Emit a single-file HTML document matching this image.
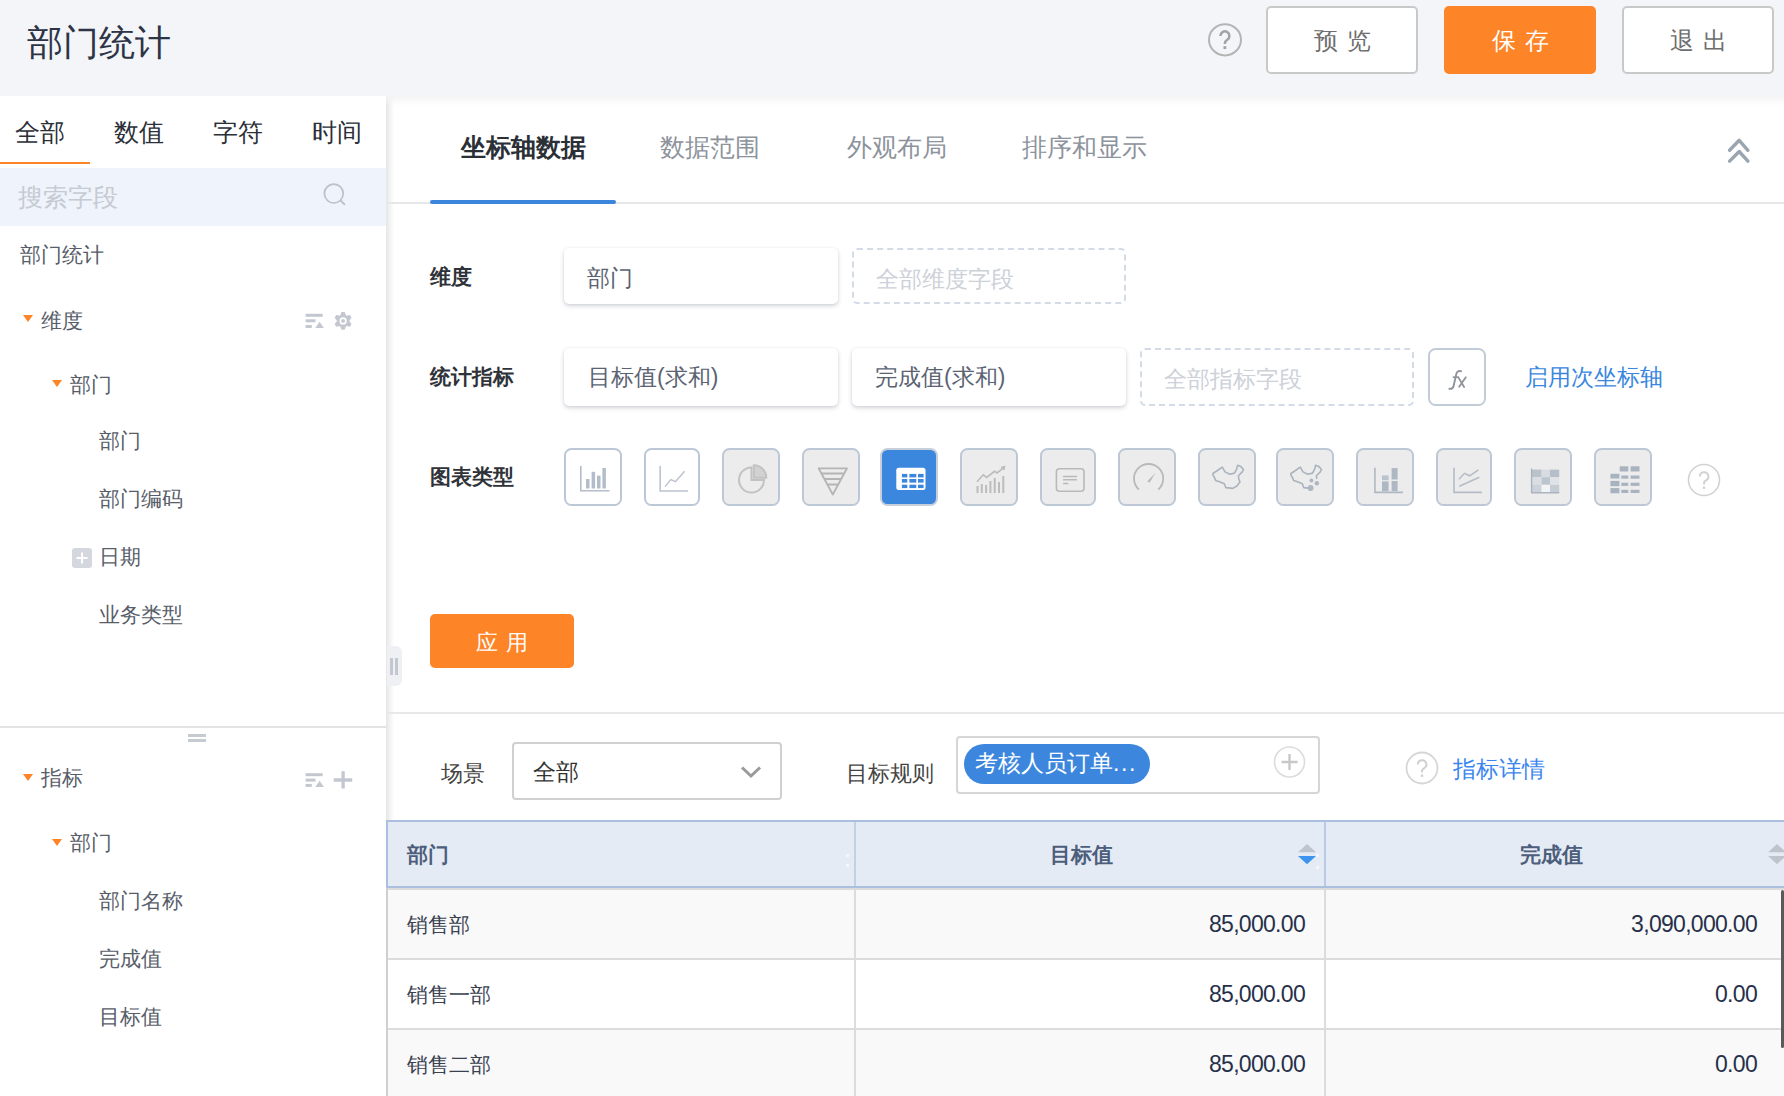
<!DOCTYPE html>
<html><head><meta charset="utf-8">
<style>
*{margin:0;padding:0;box-sizing:border-box}
html,body{width:1784px;height:1096px;overflow:hidden;background:#f4f5f9;font-family:"Liberation Sans",sans-serif;color:#333}
.a{position:absolute}
.t{position:absolute;white-space:nowrap;line-height:1}
.btn{position:absolute;top:6px;height:68px;width:152px;border:2px solid #c9c9c9;border-radius:5px;background:#fff;color:#6e6e6e;font-size:24px;line-height:65px;text-align:center;letter-spacing:9px;text-indent:9px}
.btn.o{background:#fd8427;border-color:#fd8427;color:#fff}
.tri{position:absolute;width:0;height:0;border-left:5.5px solid transparent;border-right:5.5px solid transparent;border-top:7.5px solid #fd8427;margin-left:0.5px}
.lt{font-size:21px;color:#575d69}
.lbl{font-size:21px;font-weight:bold;color:#2f3238}
.box{position:absolute;background:#fff;border-radius:5px;box-shadow:0 0 2px rgba(0,0,0,.07),0 2px 4px rgba(50,60,80,.22)}
.dash{position:absolute;border:2px dashed #d3dbe7;border-radius:5px}
.bt{font-size:23px;color:#5b6373}
.ph{font-size:23px;color:#cdd1d8}
.ic{position:absolute;top:448px;width:58px;height:58px;border:2px solid #bccadb;border-radius:7px;background:#ececec}
.ic svg{position:absolute;left:-2px;top:-2px;width:58px;height:58px}
.th{font-size:21px;font-weight:bold;color:#4c5e7b}
.td{font-size:21px;color:#3a4252}
.num{font-size:23px;color:#26304a;letter-spacing:-0.7px}
</style></head><body>
<!-- header -->
<div class="t" style="left:27px;top:25px;font-size:36px;color:#2d3446">部门统计</div>
<svg class="a" style="left:1207px;top:22px" width="36" height="36" viewBox="0 0 36 36"><ellipse cx="18" cy="17.8" rx="16" ry="15.6" fill="none" stroke="#b4b4b4" stroke-width="2"/><path d="M13.4 14a4.5 4.5 0 1 1 6.9 3.7c-1.5 1-2.4 1.9-2.4 3.5v.8" fill="none" stroke="#a3a3a3" stroke-width="2.5"/><rect x="16.5" y="24.2" width="2.8" height="2.8" fill="#a3a3a3"/></svg>
<div class="btn" style="left:1266px">预览</div>
<div class="btn o" style="left:1444px">保存</div>
<div class="btn" style="left:1622px">退出</div>

<!-- left panel -->
<div class="a" style="left:0;top:96px;width:386px;height:1000px;background:#fff"></div>
<div class="t" style="left:15px;top:120px;font-size:25px;color:#2b2f38">全部</div>
<div class="t" style="left:114px;top:120px;font-size:25px;color:#2b2f38">数值</div>
<div class="t" style="left:213px;top:120px;font-size:25px;color:#2b2f38">字符</div>
<div class="t" style="left:312px;top:120px;font-size:25px;color:#2b2f38">时间</div>
<div class="a" style="left:0;top:162px;width:90px;height:2px;background:#fd8427"></div>
<div class="a" style="left:0;top:168px;width:386px;height:58px;background:#eef3fc"></div>
<div class="t" style="left:18px;top:185px;font-size:25px;color:#c6cad1">搜索字段</div>
<svg class="a" style="left:320px;top:180px" width="30" height="30" viewBox="0 0 30 30"><circle cx="13.8" cy="13.6" r="9.4" fill="none" stroke="#bcc0c8" stroke-width="1.7"/><path d="M20.6 20.4l3.8 3.9" stroke="#bcc0c8" stroke-width="1.9" stroke-linecap="round"/></svg>

<div class="t lt" style="left:20px;top:244px">部门统计</div>
<div class="tri" style="left:22px;top:315px"></div>
<div class="t lt" style="left:41px;top:310px">维度</div>
<svg class="a" style="left:304px;top:312px" width="50" height="20" viewBox="0 0 50 20"><g fill="#c3c7d0"><rect x="1.6" y="1.8" width="17.1" height="3"/><rect x="1.6" y="7.3" width="9.9" height="3"/><rect x="1.6" y="13" width="6.2" height="3"/><path d="M11.3 16h8.6l-4.3-6.2z"/><path d="M37.54,0.04 L40.66,0.04 L42.10,3.70 L45.99,3.11 L47.56,5.82 L45.10,8.90 L47.56,11.98 L45.99,14.69 L42.10,14.10 L40.66,17.76 L37.54,17.76 L36.10,14.10 L32.21,14.69 L30.64,11.98 L33.10,8.90 L30.64,5.82 L32.21,3.11 L36.10,3.70z"/><circle cx="39.1" cy="8.9" r="6.2"/></g><circle cx="39.1" cy="8.9" r="3.6" fill="#fff"/><circle cx="39.1" cy="8.9" r="1.9" fill="#c3c7d0"/></svg>
<div class="tri" style="left:51px;top:380px"></div>
<div class="t lt" style="left:70px;top:374px">部门</div>
<div class="t lt" style="left:99px;top:430px">部门</div>
<div class="t lt" style="left:99px;top:488px">部门编码</div>
<svg class="a" style="left:72px;top:548px" width="20" height="20" viewBox="0 0 20 20"><rect x="0" y="0" width="20" height="20" rx="3" fill="#d4d8de"/><path d="M10 4.5v11M4.5 10h11" stroke="#fff" stroke-width="2"/></svg>
<div class="t lt" style="left:99px;top:546px">日期</div>
<div class="t lt" style="left:99px;top:604px">业务类型</div>

<div class="a" style="left:0;top:726px;width:386px;height:2px;background:#e3e3e3"></div>
<div class="a" style="left:188px;top:734px;width:18px;height:3px;background:#c6cad1"></div>
<div class="a" style="left:188px;top:739px;width:18px;height:3px;background:#c6cad1"></div>

<div class="tri" style="left:22px;top:774px"></div>
<div class="t lt" style="left:41px;top:767px">指标</div>
<svg class="a" style="left:304px;top:770px" width="50" height="20" viewBox="0 0 50 20"><g fill="#c3c7d0"><rect x="1.6" y="3.2" width="17.1" height="3"/><rect x="1.6" y="8.6" width="9.9" height="3"/><rect x="1.6" y="13.9" width="6.2" height="3"/><path d="M11.3 16.9h8.6l-4.3-6.1z"/></g><path d="M39.1 1.2v17.4M29.7 10h18.5" stroke="#c3c7d0" stroke-width="3.3"/></svg>
<div class="tri" style="left:51px;top:839px"></div>
<div class="t lt" style="left:70px;top:832px">部门</div>
<div class="t lt" style="left:99px;top:890px">部门名称</div>
<div class="t lt" style="left:99px;top:948px">完成值</div>
<div class="t lt" style="left:99px;top:1006px">目标值</div>

<!-- right panel -->
<div class="a" style="left:386px;top:96px;width:1398px;height:1000px;background:#fff"></div>
<div class="a" style="left:386px;top:96px;width:8px;height:1000px;background:linear-gradient(to right,#e6e6e6,rgba(255,255,255,0))"></div>
<div class="a" style="left:386px;top:96px;width:1398px;height:10px;background:linear-gradient(to bottom,#f4f4f5,rgba(255,255,255,0))"></div>

<div class="t" style="left:461px;top:135px;font-size:25px;font-weight:bold;color:#2b2f36">坐标轴数据</div>
<div class="t" style="left:660px;top:135px;font-size:25px;color:#8d939c">数据范围</div>
<div class="t" style="left:847px;top:135px;font-size:25px;color:#8d939c">外观布局</div>
<div class="t" style="left:1022px;top:135px;font-size:25px;color:#8d939c">排序和显示</div>
<div class="a" style="left:386px;top:202px;width:1398px;height:2px;background:#e6e7e9"></div>
<div class="a" style="left:430px;top:200px;width:186px;height:4px;border-radius:2px;background:#3b86dc"></div>
<svg class="a" style="left:1724px;top:134px" width="30" height="32" viewBox="0 0 30 32"><path d="M5.6 16.3l9.6-10 8.7 10M5.6 27.1l9.6-9.6 8.7 9.6" fill="none" stroke="#9ba5b0" stroke-width="3.4" stroke-linecap="round" stroke-linejoin="round"/></svg>

<div class="t lbl" style="left:430px;top:266px">维度</div>
<div class="box" style="left:564px;top:248px;width:274px;height:56px"></div>
<div class="t bt" style="left:587px;top:267px">部门</div>
<div class="dash" style="left:852px;top:248px;width:274px;height:56px"></div>
<div class="t ph" style="left:876px;top:268px">全部维度字段</div>

<div class="t lbl" style="left:430px;top:366px">统计指标</div>
<div class="box" style="left:564px;top:348px;width:274px;height:58px"></div>
<div class="t bt" style="left:588px;top:366px">目标值(求和)</div>
<div class="box" style="left:852px;top:348px;width:274px;height:58px"></div>
<div class="t bt" style="left:875px;top:366px">完成值(求和)</div>
<div class="dash" style="left:1140px;top:348px;width:274px;height:58px"></div>
<div class="t ph" style="left:1164px;top:368px">全部指标字段</div>
<svg class="a" style="left:1428px;top:348px" width="58" height="58" viewBox="0 0 58 58"><rect x="1" y="1" width="56" height="56" rx="6.5" fill="#fff" stroke="#c2ccd9" stroke-width="2"/><path d="M33 23.2c-2.6-.6-4.2.4-4.8 3.2l-2.6 11.6c-.5 2.2-2 3.1-4.2 2.8" fill="none" stroke="#8f939a" stroke-width="1.9" stroke-linecap="round"/><path d="M24.8 29.2h6.2" stroke="#8f939a" stroke-width="1.7"/><path d="M30.5 29.6l5.6 9.4M37.8 29.2l-6.6 9.6" stroke="#8f939a" stroke-width="1.8" stroke-linecap="round"/></svg>
<div class="t" style="left:1525px;top:366px;font-size:23px;color:#3a87dd">启用次坐标轴</div>

<div class="t lbl" style="left:430px;top:466px">图表类型</div>
<svg class="a" style="left:564px;top:448px" width="58" height="58" viewBox="0 0 58 58"><rect x="1" y="1" width="56" height="56" rx="6.5" fill="#fff" stroke="#bdc8d6" stroke-width="2"/><path d="M16.8 18v24.8H45.5" fill="none" stroke="#b3bdca" stroke-width="1.6"/><g fill="#b3bdca"><rect x="22" y="31" width="3.5" height="9.5"/><rect x="27.6" y="23.8" width="3.5" height="16.7"/><rect x="33" y="27.6" width="3.5" height="12.9"/><rect x="38.4" y="20" width="3.5" height="20.5"/></g></svg>
<svg class="a" style="left:644px;top:448px" width="56" height="58" viewBox="0 0 56 58"><rect x="1" y="1" width="54" height="56" rx="6.5" fill="#fff" stroke="#bdc8d6" stroke-width="2"/><path d="M16.2 18v25H44" fill="none" stroke="#bcc4ce" stroke-width="1.6"/><path d="M21.1 38.6l5.6-7 4.8 2.1 9.1-10.4" fill="none" stroke="#bcc4ce" stroke-width="1.5"/></svg>
<svg class="a" style="left:722px;top:448px" width="58" height="58" viewBox="0 0 58 58"><rect x="1" y="1" width="56" height="56" rx="6.5" fill="#ececec" stroke="#bdc8d6" stroke-width="2"/><path d="M29.5 19.5A12.5 12.5 0 1 0 42 32H29.5z" fill="none" stroke="#c2c2c2" stroke-width="2"/><path d="M31.8 17.2A12.5 12.5 0 0 1 44.3 29.7H31.8z" fill="#d2d2d2" stroke="#c2c2c2" stroke-width="2"/></svg>
<svg class="a" style="left:802px;top:448px" width="58" height="58" viewBox="0 0 58 58"><rect x="1" y="1" width="56" height="56" rx="6.5" fill="#ececec" stroke="#bdc8d6" stroke-width="2"/><path d="M16.6 20.3h28.4L30.8 46.5z" fill="none" stroke="#b4b4b4" stroke-width="1.8" stroke-linejoin="round"/><path d="M19.5 25.5h22.6M22.4 31h16.8M25.3 36.5h11" stroke="#b4b4b4" stroke-width="1.8"/></svg>
<svg class="a" style="left:880px;top:448px" width="58" height="58" viewBox="0 0 58 58"><rect x="1" y="1" width="56" height="56" rx="6.5" fill="#3b87dd" stroke="#c6cfda" stroke-width="2"/><rect x="16.3" y="19.8" width="29.2" height="22.1" rx="2.5" fill="#fff"/><g fill="#3b87dd"><rect x="21.9" y="25.9" width="5.4" height="3.5"/><rect x="29.4" y="25.9" width="6.9" height="3.5"/><rect x="38" y="25.9" width="5.6" height="3.5"/><rect x="21.9" y="31" width="5.4" height="3.6"/><rect x="29.4" y="31" width="6.9" height="3.6"/><rect x="38" y="31" width="5.6" height="3.6"/><rect x="21.9" y="36.7" width="5.4" height="3.4"/><rect x="29.4" y="36.7" width="6.9" height="3.4"/><rect x="38" y="36.7" width="5.6" height="3.4"/></g></svg>
<svg class="a" style="left:960px;top:448px" width="58" height="58" viewBox="0 0 58 58"><rect x="1" y="1" width="56" height="56" rx="6.5" fill="#ececec" stroke="#bdc8d6" stroke-width="2"/><g fill="#bcbcbc"><rect x="16.5" y="38" width="2" height="7"/><rect x="20.8" y="36" width="2" height="9"/><rect x="25.1" y="37" width="2" height="8"/><rect x="29.4" y="33" width="2" height="12"/><rect x="33.7" y="30" width="2" height="15"/><rect x="38" y="34" width="2" height="11"/><rect x="42.3" y="28" width="2" height="17"/></g><path d="M17 33.7l6.2-6.9 3.5 2.6 7.8-6.1 2.6 1.7 7.3-5.8" fill="none" stroke="#bcbcbc" stroke-width="1.6"/><path d="M45.5 17.5l-1 5-4-3.5z" fill="#bcbcbc"/></svg>
<svg class="a" style="left:1040px;top:448px" width="56" height="58" viewBox="0 0 56 58"><rect x="1" y="1" width="54" height="56" rx="6.5" fill="#ececec" stroke="#bdc8d6" stroke-width="2"/><rect x="16.4" y="20.8" width="27.6" height="22.4" rx="3" fill="none" stroke="#b9b9b9" stroke-width="1.6"/><path d="M23.1 28.5H37M23.1 31.7H37M23.1 35.4h5.3" stroke="#b9b9b9" stroke-width="1.5"/></svg>
<svg class="a" style="left:1118px;top:448px" width="58" height="58" viewBox="0 0 58 58"><rect x="1" y="1" width="56" height="56" rx="6.5" fill="#ececec" stroke="#bdc8d6" stroke-width="2"/><path d="M20.9 41.5A14.6 14.6 0 1 1 40.3 41.5" fill="none" stroke="#b9b9b9" stroke-width="1.8"/><path d="M29.3 33.2l8.3-8.5-6.2 10z" fill="#b9b9b9"/></svg>
<svg class="a" style="left:1198px;top:448px" width="58" height="58" viewBox="0 0 58 58"><rect x="1" y="1" width="56" height="56" rx="6.5" fill="#ececec" stroke="#bdc8d6" stroke-width="2"/><path d="M14.9,25.5 L18,23.5 L24.3,19.2 L27,23.9 L31.8,26.3 L36.5,25.1 L38.8,20.8 L39.6,17.2 L42.7,18.4 L45.5,21.5 L44.3,23.9 L40.4,27.8 L40.8,31 L42,34.1 L38.8,38 L34.9,40.4 L27.8,39.6 L26.3,35.7 L21.5,33.7 L17.6,32.5 L16.4,29.4 L14.9,27z" fill="none" stroke="#aab3be" stroke-width="1.6" stroke-linejoin="round"/></svg>
<svg class="a" style="left:1276px;top:448px" width="58" height="58" viewBox="0 0 58 58"><rect x="1" y="1" width="56" height="56" rx="6.5" fill="#ececec" stroke="#bdc8d6" stroke-width="2"/><path d="M34.9,40.4 L27.8,39.6 L26.3,35.7 L21.5,33.7 L17.6,32.5 L16.4,29.4 L14.9,27 L14.9,25.5 L18,23.5 L24.3,19.2 L27,23.9 L31.8,26.3 L36.5,25.1 L38.8,20.8 L39.6,17.2 L42.7,18.4 L45.5,21.5 L44.3,23.9 L40.4,27.8 L40.8,31" fill="none" stroke="#aab3be" stroke-width="1.6" stroke-linejoin="round"/><g fill="#aeb6c1"><circle cx="34.6" cy="40" r="2.9"/><circle cx="35.4" cy="32.5" r="1.9"/><circle cx="40.9" cy="35.3" r="2.2"/></g></svg>
<svg class="a" style="left:1356px;top:448px" width="58" height="58" viewBox="0 0 58 58"><rect x="1" y="1" width="56" height="56" rx="6.5" fill="#ececec" stroke="#bdc8d6" stroke-width="2"/><path d="M18.9 19.8v24.6h28" fill="none" stroke="#aeb8c4" stroke-width="1.6"/><g fill="#aeb8c4"><rect x="26" y="27.4" width="6.6" height="4.8" fill="#b9c2cd"/><rect x="26" y="33.4" width="6.6" height="9.8"/><rect x="35.6" y="20.1" width="6" height="11.4"/><rect x="35.6" y="33" width="6" height="10.2"/></g></svg>
<svg class="a" style="left:1436px;top:448px" width="56" height="58" viewBox="0 0 56 58"><rect x="1" y="1" width="54" height="56" rx="6.5" fill="#ececec" stroke="#bdc8d6" stroke-width="2"/><path d="M18 19.8v24.6h27.9" fill="none" stroke="#b4bcc7" stroke-width="1.6"/><path d="M22.9 31.3l5.6-6 5.2 2.5 8.7-6M23.3 38.2l20-9" fill="none" stroke="#b4bcc7" stroke-width="1.5"/></svg>
<svg class="a" style="left:1514px;top:448px" width="58" height="58" viewBox="0 0 58 58"><rect x="1" y="1" width="56" height="56" rx="6.5" fill="#ececec" stroke="#bdc8d6" stroke-width="2"/><g><rect x="17.4" y="21.6" width="10.2" height="7.6" fill="#bac2cc"/><rect x="27.6" y="21.6" width="8.4" height="7.6" fill="#d8dce1"/><rect x="36" y="21.6" width="9.2" height="7.6" fill="#b6bec9"/><rect x="17.4" y="29.2" width="10.2" height="7.6" fill="#dadee3"/><rect x="27.6" y="29.2" width="8.4" height="7.6" fill="#bcc4ce"/><rect x="36" y="29.2" width="9.2" height="7.6" fill="#dfe2e6"/><rect x="17.4" y="36.8" width="10.2" height="7.6" fill="#ccd2d9"/><rect x="27.6" y="36.8" width="8.4" height="7.6" fill="#f2f3f5"/><rect x="36" y="36.8" width="9.2" height="7.6" fill="#c6ccd4"/></g><path d="M17.6 20.6v24.2h27.6" fill="none" stroke="#aab3bf" stroke-width="1.4"/></svg>
<svg class="a" style="left:1594px;top:448px" width="58" height="58" viewBox="0 0 58 58"><rect x="1" y="1" width="56" height="56" rx="6.5" fill="#ececec" stroke="#bdc8d6" stroke-width="2"/><g fill="#a9b3bf"><rect x="25.7" y="18.3" width="8.6" height="5.2"/><rect x="36.6" y="18.3" width="8.9" height="5.2"/><rect x="16.4" y="25.8" width="9" height="4.7"/><rect x="16.4" y="32.9" width="9" height="5.3"/><rect x="16.4" y="40.1" width="9" height="5.2"/><rect x="27.3" y="27.5" width="7" height="3.2"/><rect x="27.3" y="34.7" width="7" height="3.2"/><rect x="27.3" y="41.8" width="7" height="3.2"/><rect x="36.6" y="27.5" width="8.9" height="3.2"/><rect x="36.6" y="34.7" width="8.9" height="3.2"/><rect x="36.6" y="41.8" width="8.9" height="3.2"/></g></svg>
<svg class="a" style="left:1687px;top:463px" width="34" height="34" viewBox="0 0 34 34"><circle cx="17" cy="17" r="15.5" fill="none" stroke="#d2d2d2" stroke-width="1.6"/><path d="M12.8 13.5a4.3 4.3 0 1 1 6.2 3.9c-1.3.7-2 1.5-2 2.8v1.3" fill="none" stroke="#d2d2d2" stroke-width="2"/><rect x="15.8" y="23.5" width="2.4" height="2.4" fill="#d2d2d2"/></svg>

<div class="a" style="left:430px;top:614px;width:144px;height:54px;border-radius:5px;background:#fd8427"></div>
<div class="t" style="left:430px;top:632px;width:144px;text-align:center;font-size:22px;color:#fff;letter-spacing:8px;text-indent:8px">应用</div>
<div class="a" style="left:387px;top:646px;width:15px;height:40px;border-radius:0 6px 6px 0;background:#eef0f3"></div>
<div class="a" style="left:390px;top:658px;width:3px;height:17px;background:#c3c7cf"></div>
<div class="a" style="left:395px;top:658px;width:3px;height:17px;background:#c3c7cf"></div>
<div class="a" style="left:386px;top:712px;width:1398px;height:2px;background:#e8e8e8"></div>

<div class="t" style="left:441px;top:763px;font-size:22px;color:#444">场景</div>
<div class="a" style="left:512px;top:742px;width:270px;height:58px;border:2px solid #d0d0d0;border-radius:4px;background:#fff"></div>
<div class="t" style="left:533px;top:761px;font-size:23px;color:#333">全部</div>
<svg class="a" style="left:738px;top:762px" width="26" height="20" viewBox="0 0 26 20"><path d="M4 5.5l9 8.5 9-8.5" fill="none" stroke="#9a9a9a" stroke-width="3"/></svg>
<div class="t" style="left:846px;top:763px;font-size:22px;color:#444">目标规则</div>
<div class="a" style="left:956px;top:736px;width:364px;height:58px;border:2px solid #d6d6d6;border-radius:4px;background:#fff"></div>
<div class="a" style="left:964px;top:744px;width:186px;height:40px;border-radius:20px;background:#3c87dd"></div>
<div class="t" style="left:975px;top:752px;font-size:23px;color:#fff">考核人员订单<span style="letter-spacing:1.6px">...</span></div>
<svg class="a" style="left:1273px;top:746px" width="34" height="32" viewBox="0 0 34 32"><circle cx="16.5" cy="16" r="15" fill="none" stroke="#dcdcdc" stroke-width="1.6"/><path d="M16.5 8v16M8.5 16h16" stroke="#c8c8c8" stroke-width="2.4"/></svg>
<svg class="a" style="left:1405px;top:751px" width="34" height="34" viewBox="0 0 34 34"><circle cx="17" cy="17" r="15.5" fill="none" stroke="#d6d6d6" stroke-width="1.8"/><path d="M12.8 13.5a4.3 4.3 0 1 1 6.2 3.9c-1.3.7-2 1.5-2 2.8v1.3" fill="none" stroke="#d0d0d0" stroke-width="2"/><rect x="15.8" y="23.5" width="2.4" height="2.4" fill="#d0d0d0"/></svg>
<div class="t" style="left:1453px;top:758px;font-size:23px;color:#3b86ee">指标详情</div>


<div class="a" style="left:386px;top:820px;width:1398px;height:68px;background:#e5ebf5;border-top:2px solid #aac0de;border-bottom:2px solid #aac0de;border-left:2px solid #aac0de"></div>
<div class="a" style="left:854px;top:822px;width:2px;height:64px;background:#c0d0e6"></div>
<div class="a" style="left:1324px;top:822px;width:2px;height:64px;background:#b8cbe6"></div>
<div class="a" style="left:386px;top:888px;width:1398px;height:2px;background:#dcdcdc"></div>
<div class="a" style="left:386px;top:890px;width:1398px;height:68px;background:#f9f9f9"></div>
<div class="a" style="left:386px;top:958px;width:1398px;height:2px;background:#dcdcdc"></div>
<div class="a" style="left:386px;top:960px;width:1398px;height:68px;background:#fff"></div>
<div class="a" style="left:386px;top:1028px;width:1398px;height:2px;background:#dcdcdc"></div>
<div class="a" style="left:386px;top:1030px;width:1398px;height:66px;background:#f9f9f9"></div>
<div class="a" style="left:386px;top:888px;width:2px;height:208px;background:#cfcfcf"></div>
<div class="a" style="left:854px;top:888px;width:2px;height:208px;background:#dcdcdc"></div>
<div class="a" style="left:1324px;top:888px;width:2px;height:208px;background:#dcdcdc"></div>
<div class="a" style="left:1781px;top:890px;width:3px;height:158px;border-radius:2px;background:#5a5a5a"></div>
<div class="t th" style="left:407px;top:844px">部门</div>
<div class="a" style="left:846px;top:854px;width:3px;height:3px;background:#f4f6fa"></div><div class="a" style="left:846px;top:864px;width:3px;height:3px;background:#f4f6fa"></div><div class="a" style="left:1316px;top:854px;width:3px;height:3px;background:#f4f6fa"></div><div class="a" style="left:1316px;top:866px;width:3px;height:3px;background:#f4f6fa"></div>
<div class="t th" style="left:1050px;top:844px">目标值</div>
<div class="t th" style="left:1520px;top:844px">完成值</div>
<svg class="a" style="left:1296px;top:842px" width="22" height="24" viewBox="0 0 22 24"><path d="M2 10.2L11 2l9 8.2z" fill="#bfc4cc"/><path d="M2 13.9h18L11 22.3z" fill="#3c93f0"/></svg>
<svg class="a" style="left:1766px;top:842px" width="22" height="24" viewBox="0 0 22 24"><path d="M2 10.2L11 2l9 8.2z" fill="#bfc4cc"/><path d="M2 13.9h18L11 22.3z" fill="#bfc4cc"/></svg>
<div class="t td" style="left:407px;top:914px">销售部</div>
<div class="t td" style="left:407px;top:984px">销售一部</div>
<div class="t td" style="left:407px;top:1054px">销售二部</div>
<div class="t num" style="right:479px;top:913px">85,000.00</div>
<div class="t num" style="right:479px;top:983px">85,000.00</div>
<div class="t num" style="right:479px;top:1053px">85,000.00</div>
<div class="t num" style="right:27px;top:913px">3,090,000.00</div>
<div class="t num" style="right:27px;top:983px">0.00</div>
<div class="t num" style="right:27px;top:1053px">0.00</div>

</body></html>
